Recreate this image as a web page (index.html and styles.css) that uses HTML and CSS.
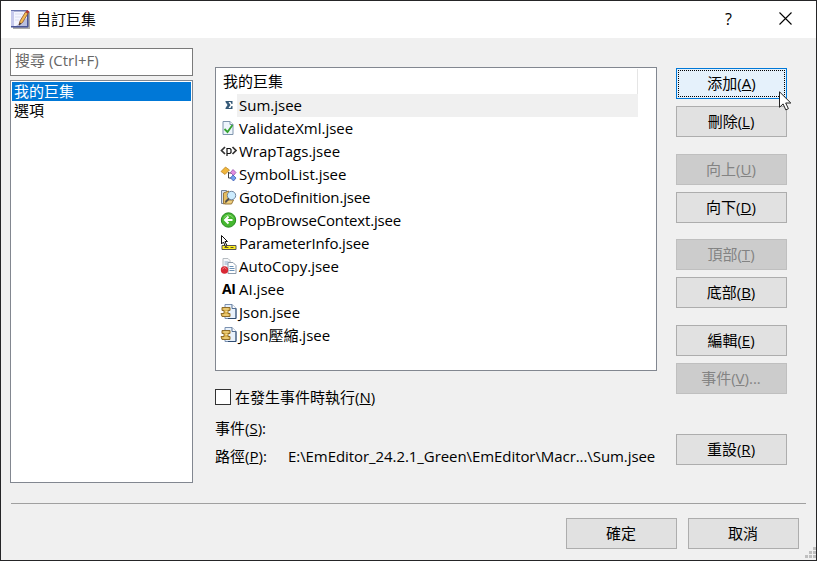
FILE: index.html
```html
<!DOCTYPE html>
<html lang="zh-Hant">
<head>
<meta charset="utf-8">
<title>自訂巨集</title>
<link rel="stylesheet" href="styles.css">
</head>
<body>
<div class="dialog">
  <header class="titlebar">
    <svg class="app-icon" width="21" height="20" viewBox="0 0 21 20">
      <path d="M3 3h17v17H3z" fill="#aaa"/><path d="M1 1h17v17H1z" fill="#f4f5ff"/>
      <path d="M1 1h17v1.500H1z" fill="#6873ad"/><path d="M1 2h3v15H1z" fill="#c6c9ec"/><path d="M1 17h17v1.500H1zM17 2h1.500v16H17z" fill="#4a5598"/>
      <path d="M6 17L17 9v8z" fill="#b9bfdf"/><path d="M5 5h8M5 8h6M5 11h4" stroke="#dadcf0"/>
      <path d="M9 16l1-4 5.500-9 2.500 1.500-5.500 9z" fill="#f3bd52" stroke="#8c4c27" stroke-width=".8"/>
      <path d="M15.500 3l1.500-2 2.500 1.500-1.500 2z" fill="#b9382e"/><path d="M9 16.500l.7-3 1.600 1z" fill="#333"/>
    </svg>
    <h1 class="title">自訂巨集</h1>
    <span class="help">?</span>
    <svg class="close" width="13" height="13" viewBox="0 0 13 13"><path d="M.5 .5l12 12M12.500 .5l-12 12" stroke="#000" stroke-width="1.100" fill="none"/></svg>
  </header>
  <main class="content">
    <nav class="sidebar">
      <div class="search">搜尋 (Ctrl+F)</div>
      <ul class="pages"><li class="selected">我的巨集</li><li>選項</li></ul>
    </nav>
    <section class="panel">
      <div class="macros">
        <div class="list-head">我的巨集</div>
        <ul class="rows">
          <li class="current"><svg class="icon" viewBox="0 0 16 16"><path d="M5 4h7v3h-1L10 5H8l2 3-2 3h2l1-2h1v3H5v-1l2-3-2-3z" fill="#365a78"/></svg><span class="name">Sum.jsee</span></li>
          <li><svg class="icon" viewBox="0 0 16 16"><path d="M2.500 1.500h7l3 3v10h-10z" fill="#eef5fc" stroke="#7e94ad"/><path d="M9.500 1.500v3h3" fill="#fff" stroke="#7e94ad"/><path d="M4 9l3 3 5-7" fill="none" stroke="#35a331" stroke-width="1.800"/></svg><span class="name">ValidateXml.jsee</span></li>
          <li><svg class="icon" viewBox="0 0 16 16"><path d="M4.500 4L1 7.500 4.500 11M12 4l3.500 3.500L12 11" fill="none" stroke="#333" stroke-width="1.700"/><path d="M6.500 13V5M6.500 5.500h3l1 1v3l-1 1h-3" fill="none" stroke="#111" stroke-width="1.200"/></svg><span class="name">WrapTags.jsee</span></li>
          <li><svg class="icon" viewBox="0 0 16 16"><path d="M8 6v6h3M8 7h4" fill="none" stroke="#444"/><path d="M.5 5.500L5 1l4 3-4.500 4.500z" fill="#f0b63c" stroke="#b47d1d" stroke-width=".7"/><path d="M10 6.500L12.500 3.500l3 3-2.500 3z" fill="#e38de0" stroke="#8646a3" stroke-width=".7"/><path d="M10 12l2.500-3 3 3-2.500 3z" fill="#74a0ed" stroke="#2f4eae" stroke-width=".7"/></svg><span class="name">SymbolList.jsee</span></li>
          <li><svg class="icon" viewBox="0 0 16 16"><path d="M1 1.500h5v13H1z" fill="#d9e1ef" stroke="#75839c"/><path d="M3 15V4l5-2v11z" fill="#e6bd62" stroke="#98783c"/><path d="M4 15h7l2-4H7z" fill="#f0cf7c" stroke="#98783c"/><circle cx="11" cy="6.500" r="4.200" fill="#ccecff" stroke="#71869f"/><path d="M8.500 9.500L5 13" stroke="#53514f" stroke-width="2"/></svg><span class="name tight-text">GotoDefinition.jsee</span></li>
          <li><svg class="icon" viewBox="0 0 16 16"><circle cx="8" cy="8" r="7.200" fill="#45b72f" stroke="#258b1e"/><path d="M3 6q5-6 10 0" fill="none" stroke="#8edc75"/><path d="M12 8H5M8 4.500L4.500 8 8 11.500" fill="none" stroke="#fff" stroke-width="2"/></svg><span class="name tight-text">PopBrowseContext.jsee</span></li>
          <li><svg class="icon" viewBox="0 0 16 16"><path d="M1.500 10.500h14v4h-14z" fill="#ffee21" stroke="#555"/><path d="M4 12.500h4M10 12.500h3" stroke="#5f5a20"/><path d="M1 .5v8.500l2-2 2 4.500 1.500-.7-2-4.300H7z" fill="#fff" stroke="#111"/></svg><span class="name tight-text">ParameterInfo.jsee</span></li>
          <li><svg class="icon" viewBox="0 0 16 16"><path d="M2.500.5h5l2 2v10h-7z" fill="#f8f9fb" stroke="#b5bbc0"/><path d="M4 4h4M4 6h4" stroke="#8ca9c7"/><path d="M7.500 4.500h5l3 3v8h-8z" fill="#fff" stroke="#8c9aaa"/><path d="M9 8.500h4M9 10.500h5M9 12.500h5" stroke="#6b91b7"/><circle cx="4" cy="12" r="3.700" fill="#d82935"/><path d="M2 11q2-3 4 0" stroke="#f28a8a" fill="none"/></svg><span class="name">AutoCopy.jsee</span></li>
          <li><span class="icon ai">AI</span><span class="name">AI.jsee</span></li>
          <li><svg class="icon" viewBox="0 0 16 16"><path d="M4.500.5h7l4 4v10h-11z" fill="#e8f1fb" stroke="#7b91b0"/><path d="M15.500 4.500v10h-8" fill="none" stroke="#2f4b70"/><path d="M11.500.5v4h4" fill="#fff" stroke="#536f93"/><path d="M1.500 3.500h8v3h-2v3h2v3h-8l-1-3h3v-3h-2z" fill="#ddb34e" stroke="#8f6c2b"/><path d="M3 5h5M5 7.500h2M3 11h5" stroke="#f5df9a"/></svg><span class="name">Json.jsee</span></li>
          <li><svg class="icon" viewBox="0 0 16 16"><path d="M4.500.5h7l4 4v10h-11z" fill="#e8f1fb" stroke="#7b91b0"/><path d="M15.500 4.500v10h-8" fill="none" stroke="#2f4b70"/><path d="M11.500.5v4h4" fill="#fff" stroke="#536f93"/><path d="M1.500 3.500h8v3h-2v3h2v3h-8l-1-3h3v-3h-2z" fill="#ddb34e" stroke="#8f6c2b"/><path d="M3 5h5M5 7.500h2M3 11h5" stroke="#f5df9a"/></svg><span class="name">Json壓縮.jsee</span></li>
        </ul>
      </div>
      <div class="check"><span class="box"></span><span class="check-text">在發生事件時執行(<u>N</u>)</span></div>
      <div class="field events"><span class="label">事件(<u>S</u>):</span></div>
      <div class="field"><span class="label">路徑(<u>P</u>):</span><span class="path">E:\EmEditor_24.2.1_Green\EmEditor\Macr...\Sum.jsee</span></div>
    </section>
    <aside class="actions">
      <button class="button focused"><span>添加(<u>A</u>)</span></button>
      <button class="button">刪除(<u>L</u>)</button>
      <button class="button group" disabled>向上(<u>U</u>)</button>
      <button class="button">向下(<u>D</u>)</button>
      <button class="button group tight" disabled>頂部(<u>T</u>)</button>
      <button class="button">底部(<u>B</u>)</button>
      <button class="button group">編輯(<u>E</u>)</button>
      <button class="button" disabled>事件(<u>V</u>)...</button>
      <button class="button reset">重設(<u>R</u>)</button>
    </aside>
  </main>
  <footer class="footer"><button class="button">確定</button><button class="button">取消</button></footer>
  <svg class="grip" width="11" height="12" viewBox="0 0 11 12"><path d="M8 0h3v3H8zM4 4h3v3H4zM8 4h3v3H8zM0 8h3v3H0zM4 8h3v3H4zM8 8h3v3H8z" fill="#bfbfbf"/></svg>
  <svg class="cursor" width="13" height="20" viewBox="0 0 13 20"><path d="M.5 .8v15.500l3.600-3.400 2.700 6 2.600-1.200-2.700-5.700h5.100z" fill="#fff" stroke="#222"/></svg>
</div>
</body>
</html>
```
FILE: styles.css
```css
* { box-sizing: border-box; }
body {
  margin: 0;
  font: 15px/20px "Open Sans", "Noto Sans CJK TC", sans-serif;
  color: #000;
}
ul { list-style: none; margin: 0; padding: 0; }
u { text-underline-offset: 1px; text-decoration-thickness: 1px; text-decoration-skip-ink: none; }
.dialog {
  position: relative;
  width: 817px;
  height: 561px;
  border: 1px solid #252527;
  background: #f0f0f0;
  display: flex;
  flex-direction: column;
  overflow: hidden;
  white-space: nowrap;
}
.titlebar {
  height: 37px;
  flex: none;
  background: #fff;
  display: flex;
  align-items: center;
  padding: 0 24px 2px 9px;
}
.app-icon { flex: none; }
.title { font-size: 15px; font-weight: 400; margin: 0 auto 0 5px; }
.help { font-size: 16px; margin-right: 47px; }
.content { flex: none; height: 464px; padding: 10px 29px 0 9px; display: flex; }
.sidebar { width: 183px; display: flex; flex-direction: column; gap: 4px; }
.search {
  height: 28px;
  border: 1px solid #7a7a7a;
  background: #fff;
  color: #666;
  padding: 1px 4px;
}
.pages { height: 403px; border: 1px solid #828790; background: #fff; padding: 1px; }
.pages li { height: 19px; line-height: 19px; padding-left: 2px; }
.pages .selected { background: #0078d7; color: #fff; }
.panel { width: 442px; margin-left: 22px; padding-top: 19px; }
.macros { height: 304px; border: 1px solid #828790; background: #fff; padding: 1px 18px 0 4px; }
.list-head { height: 25px; line-height: 25px; padding-left: 3px; border-right: 1px solid #e5e5e5; }
.rows li { height: 23px; display: flex; align-items: center; }
.icon { width: 17px; height: 16px; flex: none; margin-bottom: 1px; }
.ai { font: 700 14px/16px "Open Sans", sans-serif; padding-left: 2px; letter-spacing: -.3px; }
.name { flex: 1; height: 23px; line-height: 23px; padding-left: 2px; }
.tight-text { letter-spacing: -.17px; }
.current .name { background: #f0f0f0; }
.check { display: flex; align-items: center; gap: 4px; height: 22px; margin-top: 15px; }
.check-text { padding-bottom: 1px; }
.box { width: 16px; height: 16px; border: 1px solid #333; background: #fff; }
.field { display: flex; height: 28px; align-items: center; }
.events { margin-top: 6px; }
.label { width: 73px; flex: none; }
.path { letter-spacing: -.07px; }
.actions { width: 111px; margin-left: 19px; padding-top: 20px; display: flex; flex-direction: column; gap: 7px; }
.button {
  width: 111px;
  height: 31px;
  flex: none;
  margin: 0;
  padding: 0 1px 1px 0;
  border: 1px solid #adadad;
  background: #e1e1e1;
  color: #000;
  font: inherit;
  line-height: 20px;
}
.button:disabled { background: #ccc; border-color: #bfbfbf; color: #838383; }
.button.focused { border-color: #0078d7; background: #e5f1fb; padding: 0; }
.focused > span { display: block; margin: 1px; height: 27px; line-height: 25px; border: 1px dotted #000; }
.group { margin-top: 10px; }
.tight { margin-top: 9px; }
.reset { margin-top: 33px; }
.footer {
  border-top: 1px solid #a0a0a0;
  margin: 1px 10px 0;
  padding: 14px 7px 0 0;
  display: flex;
  justify-content: flex-end;
  gap: 11px;
}
.grip { position: absolute; right: 0; bottom: 1px; }
.cursor { position: absolute; left: 778px; top: 90px; }
```
